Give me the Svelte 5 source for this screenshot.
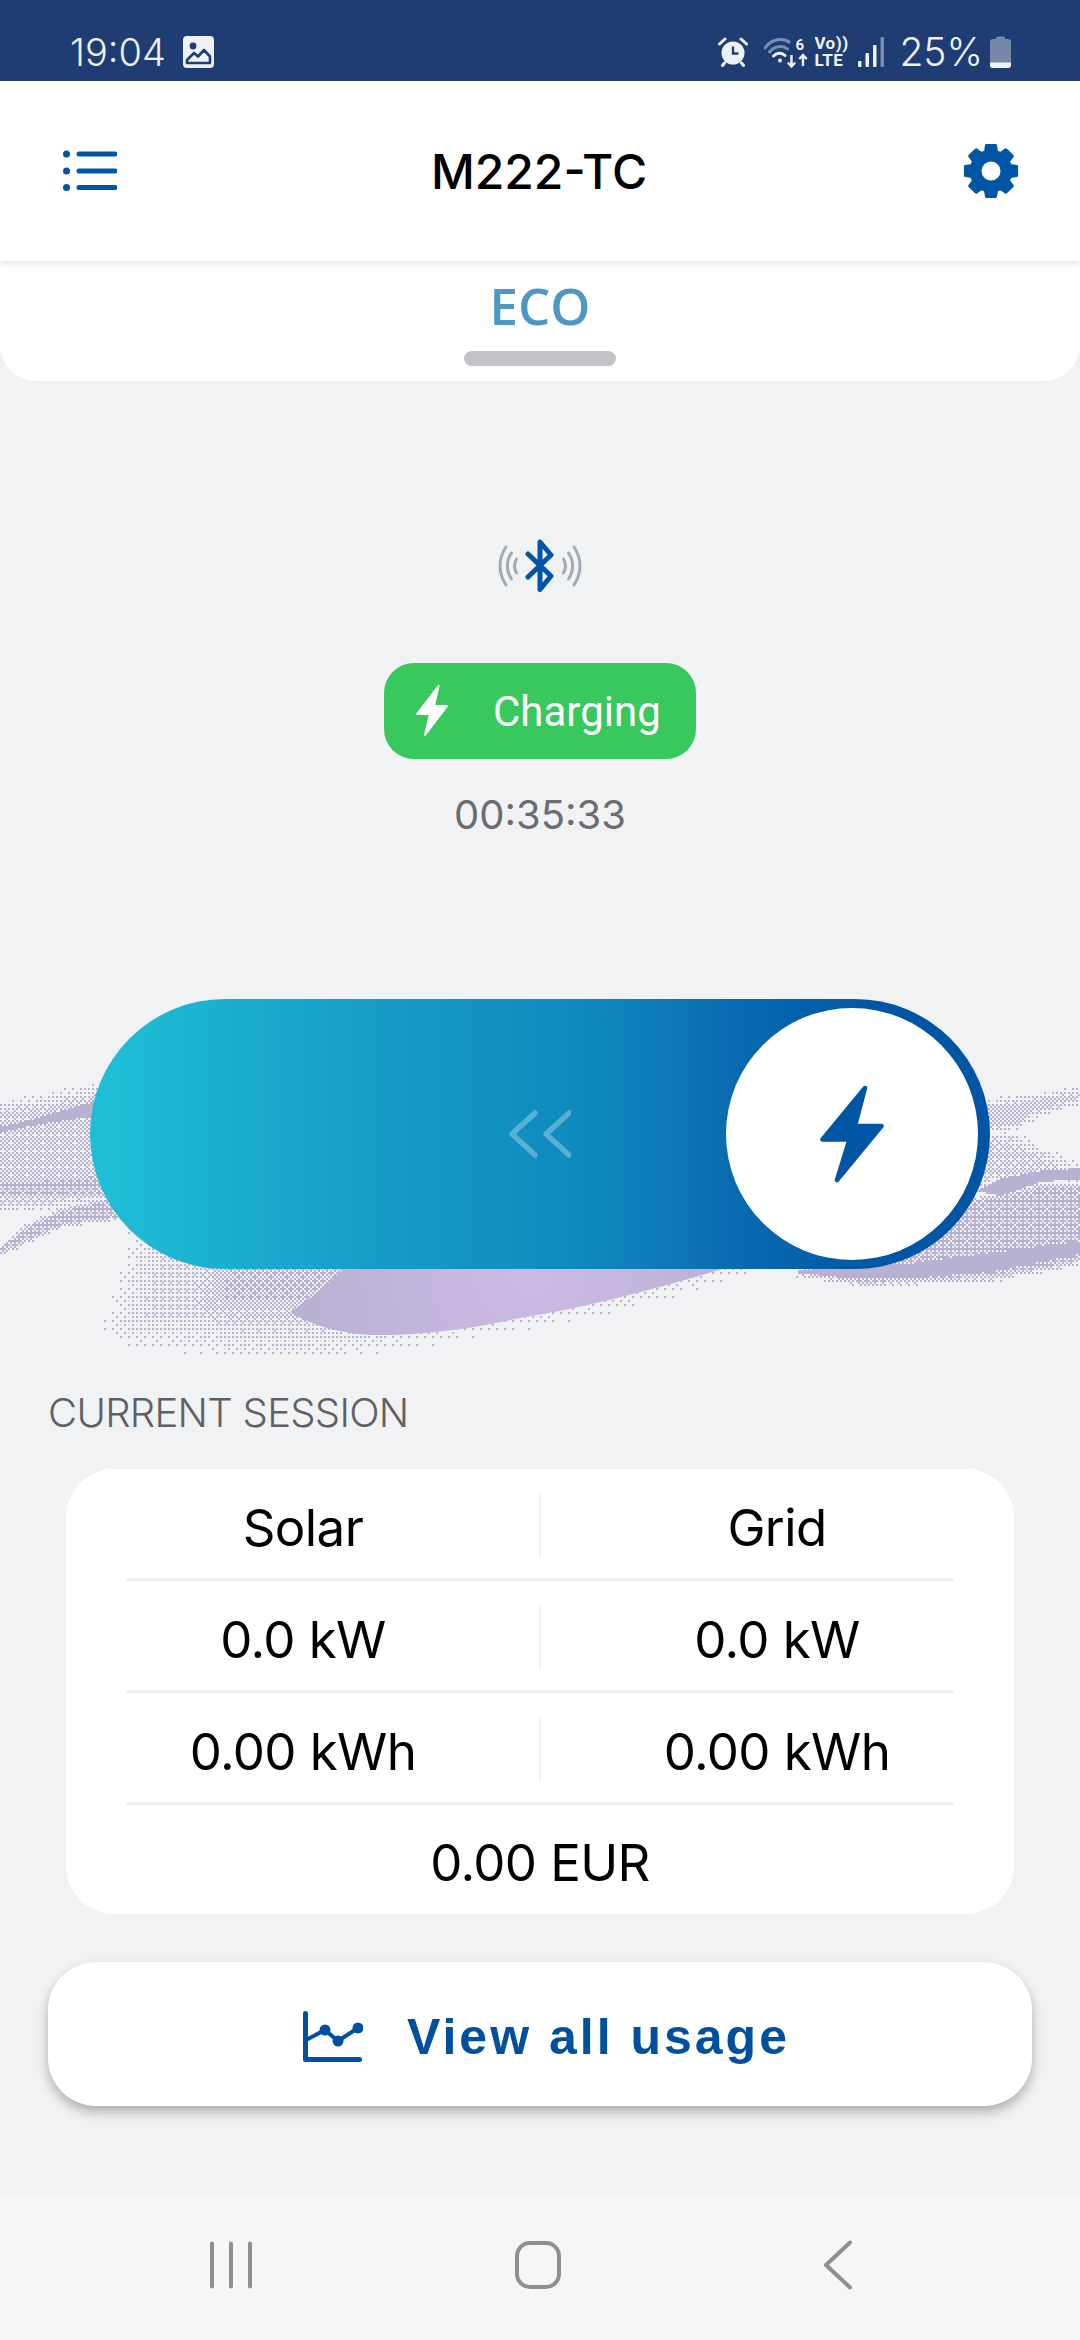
<script>
  const rows = [
    ['Solar', 'Grid'],
    ['0.0 kW', '0.0 kW'],
    ['0.00 kWh', '0.00 kWh']
  ];

  // dithered backdrop behind the slider: [density, fade px, polygon]
  const regions = [
    // left wave
    [0.45, 18, [[-20, 1100], [40, 1092], [97, 1080], [220, 1075], [220, 1203], [107, 1206], [60, 1212], [-20, 1216]]],
    [0.66, 14, [[-20, 1172], [100, 1165], [220, 1165], [220, 1200], [40, 1206], [-20, 1204]]],
    [0.7, 6, [[-10, 1250], [25, 1222], [60, 1205], [220, 1170], [220, 1205], [60, 1228], [3, 1255]]],
    [1, 0, [[0, 1126], [33, 1118], [60, 1110], [110, 1096], [110, 1114], [50, 1121], [0, 1131]]],
    // bottom wave
    [0.3, 40, [[135, 1200], [100, 1332], [125, 1348], [230, 1358], [300, 1360], [385, 1352], [457, 1340], [530, 1328], [590, 1318], [650, 1303], [760, 1272], [760, 1200]]],
    [0.6, 70, [[180, 1200], [150, 1338], [230, 1358], [300, 1360], [385, 1350], [457, 1338], [530, 1326], [590, 1316], [650, 1301], [760, 1270], [760, 1200]]],
    // right wave
    [0.5, 10, [[900, 1108], [1030, 1092], [1100, 1082], [1100, 1100], [1035, 1118], [1020, 1130], [900, 1145]]],
    [0.42, 16, [[900, 1135], [1010, 1128], [1050, 1148], [1100, 1168], [1100, 1180], [900, 1195]]],
    [0.66, 8, [[900, 1205], [1000, 1190], [1040, 1180], [1100, 1178], [1100, 1262], [990, 1282], [863, 1287], [790, 1276]]],
    [1, 0, [[975, 1190], [1000, 1178], [1040, 1170], [1080, 1167], [1080, 1178], [1040, 1181], [1000, 1195]]],
    [1, 0, [[797, 1269], [913, 1262], [990, 1252], [1080, 1240], [1080, 1253], [990, 1271], [900, 1278], [860, 1278], [797, 1272]]]
  ];

  const bayer = [
    [0, 32, 8, 40, 2, 34, 10, 42],
    [48, 16, 56, 24, 50, 18, 58, 26],
    [12, 44, 4, 36, 14, 46, 6, 38],
    [60, 28, 52, 20, 62, 30, 54, 22],
    [3, 35, 11, 43, 1, 33, 9, 41],
    [51, 19, 59, 27, 49, 17, 57, 25],
    [15, 47, 7, 39, 13, 45, 5, 37],
    [63, 31, 55, 23, 61, 29, 53, 21]
  ];

  function inside(poly, x, y) {
    let hit = false;
    for (let i = 0, j = poly.length - 1; i < poly.length; j = i++) {
      const [xi, yi] = poly[i];
      const [xj, yj] = poly[j];
      if (yi > y !== yj > y && x < ((xj - xi) * (y - yi)) / (yj - yi) + xi) hit = !hit;
    }
    return hit;
  }

  function edgeDistance(poly, x, y) {
    let best = Infinity;
    for (let i = 0, j = poly.length - 1; i < poly.length; j = i++) {
      const [ax, ay] = poly[j];
      const [bx, by] = poly[i];
      const dx = bx - ax;
      const dy = by - ay;
      const t = Math.max(0, Math.min(1, ((x - ax) * dx + (y - ay) * dy) / (dx * dx + dy * dy)));
      best = Math.min(best, Math.hypot(x - ax - t * dx, y - ay - t * dy));
    }
    return best;
  }

  function ditherPath() {
    let d = '';
    for (let y = 1080; y < 1360; y += 2) {
      for (let x = 0; x < 1080; x += 2) {
        let level = 0;
        for (const [density, fade, poly] of regions) {
          if (density <= level || !inside(poly, x, y)) continue;
          const soft = fade ? Math.min(1, 0.04 + edgeDistance(poly, x, y) / fade) : 1;
          level = Math.max(level, density * soft);
        }
        if (level > 0 && bayer[(y / 2) % 8][(x / 2) % 8] / 64 < level) d += `M${x} ${y}h2v2h-2z`;
      }
    }
    return d;
  }

  function gearPath() {
    const pt = (r, deg) => {
      const a = ((deg - 90) * Math.PI) / 180;
      return `${(r * Math.cos(a)).toFixed(2)} ${(r * Math.sin(a)).toFixed(2)}`;
    };
    let d = '';
    for (let i = 0; i < 8; i += 1) {
      const c = i * 45;
      d += `${i ? 'L' : 'M'}${pt(20, c - 16)} L${pt(26, c - 10)} L${pt(26, c + 10)} L${pt(20, c + 16)} `;
    }
    return `${d}Z M11 0 A11 11 0 1 0 -11 0 A11 11 0 1 0 11 0 Z`;
  }

  const dither = ditherPath();
  const gear = gearPath();
</script>

<div class="phone">
  <div class="status">
    <div class="status-left">
      <span class="clock">19:04</span>
      <svg class="pic" viewBox="0 0 31 32" width="31" height="32">
        <rect width="31" height="32" rx="4" fill="#eef1f7" />
        <circle cx="10" cy="10" r="3.4" fill="#1f3d72" />
        <path d="M4 27v-3l7-7 4 3.5L21 14l6 6.5V27z" fill="none" stroke="#1f3d72" stroke-width="2.6" stroke-linejoin="round" />
      </svg>
    </div>
    <div class="status-right">
      <svg class="alarm" viewBox="0 0 30 30" width="30" height="30">
        <circle cx="15" cy="16" r="11.5" fill="#eef1f7" />
        <path d="M15 9.500V16.500H20.500" fill="none" stroke="#1f3d72" stroke-width="2.400" />
        <path d="M1.500 7 7 2M28.500 7 23 2M6.500 26 4.500 28.500M23.500 26 25.500 28.500" stroke="#eef1f7" stroke-width="3" stroke-linecap="round" />
      </svg>
      <svg class="net" viewBox="0 0 44 32" width="44" height="32">
        <g fill="none" stroke-width="3" stroke-linecap="round">
          <path d="M1 12C8 2 20 2 25 6" stroke="#7d8fb0" />
          <path d="M5.500 16C10 10 19 9 23.500 13" stroke="#7d8fb0" />
          <path d="M9.500 20C13 16.500 18 16.500 21 19.500" stroke="#eef1f7" />
        </g>
        <circle cx="16" cy="24.500" r="2" fill="#eef1f7" />
        <text x="31.500" y="14" class="six">6</text>
        <path d="M27.500 19V30M23.800 26.500 27.500 30.500 31.200 26.500M39 30V19M35.300 23 39 19 42.700 23" fill="none" stroke="#eef1f7" stroke-width="2.400" />
      </svg>
      <div class="volte"><span>Vo))</span><span>LTE</span></div>
      <svg class="signal" viewBox="0 0 27 30" width="27" height="30">
        <rect x="0" y="24" width="3.500" height="6" rx="1" fill="#eef1f7" />
        <rect x="7.500" y="16" width="3.500" height="14" rx="1" fill="#eef1f7" />
        <rect x="15" y="8" width="3.500" height="22" rx="1" fill="#eef1f7" />
        <rect x="22.500" y="0" width="3.500" height="30" rx="1" fill="#7d8fb0" />
      </svg>
      <span class="pct">25%</span>
      <svg class="batt" viewBox="0 0 21 32" width="21" height="32">
        <path d="M6 2.500Q6 0.500 8 0.500H13Q15 0.500 15 2.500V3H18Q21 3 21 6V29Q21 32 18 32H3Q0 32 0 29V6Q0 3 3 3H6Z" fill="#7789ab" />
        <path d="M0 26.500H21V29Q21 32 18 32H3Q0 32 0 29Z" fill="#eef1f7" />
      </svg>
    </div>
  </div>

  <header class="topbar">
    <svg class="menu" viewBox="0 0 54 42" width="54" height="42">
      <circle cx="3.500" cy="4" r="3.500" />
      <circle cx="3.500" cy="21" r="3.500" />
      <circle cx="3.500" cy="37.500" r="3.500" />
      <rect x="13.500" y="1.500" width="41" height="5" rx="2.500" />
      <rect x="13.500" y="18.500" width="41" height="5" rx="2.500" />
      <rect x="13.500" y="35" width="41" height="5" rx="2.500" />
    </svg>
    <h1>M222-TC</h1>
    <svg class="gear" viewBox="-30 -30 60 60" width="60" height="60">
      <path d={gear} fill-rule="evenodd" stroke-width="3" stroke-linejoin="round" />
    </svg>
  </header>

  <div class="mode">
    <span class="mode-name">ECO</span>
    <span class="grip"></span>
  </div>

  <main class="content">
    <svg class="bt" viewBox="0 0 84 54" width="84" height="54">
      <g fill="none" stroke="#a4a8b4" stroke-width="3" stroke-linecap="round">
        <path d="M8 8C0 20 0 34 8 46" />
        <path d="M13.500 14C8 22 8 32 13.500 40" />
        <path d="M18.500 20C16 24 16 30 18.500 34" />
        <path d="M76 8C84 20 84 34 76 46" />
        <path d="M70.500 14C76 22 76 32 70.500 40" />
        <path d="M65.500 20C68 24 68 30 65.500 34" />
      </g>
      <path d="M30 15 53 37 42 50.500V3L53 16 30 38" fill="none" stroke="#0055a5" stroke-width="5" stroke-linecap="round" stroke-linejoin="round" />
    </svg>

    <div class="badge">
      <svg viewBox="0 0 34 54" width="34" height="54">
        <path d="M23.500 2 2 30H15L10 51 32 22H19Z" fill="#fff" stroke="#fff" stroke-width="2" stroke-linejoin="round" />
      </svg>
      <span>Charging</span>
    </div>
    <div class="elapsed">00:35:33</div>

    <section class="hero">
      <svg class="waves" viewBox="0 999 1080 370" width="1080" height="370" aria-hidden="true">
        <defs>
          <radialGradient id="wave-fill" gradientUnits="userSpaceOnUse" cx="530" cy="1270" r="230">
            <stop offset="0" stop-color="#ccbae4" />
            <stop offset="1" stop-color="#b9b1d2" />
          </radialGradient>
        </defs>
        <path d={dither} fill="#b9b1d2" />
        <path d="M350 1262Q322 1292 290 1312Q322 1332 370 1335Q440 1336 520 1318Q610 1304 745 1262Z" fill="url(#wave-fill)" />
      </svg>
      <div class="slider">
        <svg class="chevrons" viewBox="0 0 62 48" width="62" height="48">
          <path d="M26 3 3 24 26 45M60 3 37 24 60 45" fill="none" stroke="#fff" stroke-opacity="0.3" stroke-width="5.500" stroke-linecap="round" stroke-linejoin="round" />
        </svg>
        <div class="knob">
          <svg viewBox="0 0 64 98" width="64" height="98">
            <path d="M45 3 2.500 54.500H29.500L17 95 61.500 41H35Z" fill="#0055a5" stroke="#0055a5" stroke-width="4.500" stroke-linejoin="round" />
          </svg>
        </div>
      </div>
    </section>

    <div class="label">CURRENT SESSION</div>

    <div class="card">
      {#each rows as row}
        <div class="row">
          <div class="cell">{row[0]}</div>
          <div class="cell">{row[1]}</div>
        </div>
      {/each}
      <div class="total">0.00 EUR</div>
    </div>

    <button class="usage">
      <svg viewBox="0 0 60 52" width="60" height="52">
        <path d="M2.500 2.500V48.500H56.500" fill="none" stroke="#00509f" stroke-width="5" stroke-linecap="round" stroke-linejoin="round" />
        <path d="M3 29 22 19 35 30 55 17" fill="none" stroke="#00509f" stroke-width="4" />
        <circle cx="22" cy="19" r="5.500" fill="#00509f" />
        <circle cx="35" cy="30" r="5.500" fill="#00509f" />
        <circle cx="55" cy="17" r="5.500" fill="#00509f" />
      </svg>
      <span>View all usage</span>
    </button>
  </main>

  <nav class="navbar">
    <svg viewBox="0 0 44 48" width="44" height="48">
      <path d="M3 2.500V45.500M22 2.500V45.500M41 2.500V45.500" stroke="#8f8f92" stroke-width="4" stroke-linecap="round" />
    </svg>
    <svg viewBox="0 0 46 48" width="46" height="48">
      <rect x="2" y="2" width="42" height="44" rx="13" fill="none" stroke="#8f8f92" stroke-width="4" />
    </svg>
    <svg viewBox="0 0 30 50" width="30" height="50">
      <path d="M27 2.500 3 25 27 47.500" fill="none" stroke="#8f8f92" stroke-width="4" stroke-linecap="round" stroke-linejoin="round" />
    </svg>
  </nav>
</div>

<style>
  :global(body) { margin: 0; background: #f1f2f4; }

  .phone {
    width: 1080px;
    height: 2340px;
    display: flex;
    flex-direction: column;
    overflow: hidden;
    background: #f1f2f4;
    font-family: Inter, Roboto, "Liberation Sans", sans-serif;
  }

  .status {
    height: 81px;
    flex: none;
    box-sizing: border-box;
    padding: 0 69px 0 70px;
    display: flex;
    align-items: center;
    justify-content: space-between;
    background: #1f3d72;
    color: #eef1f7;
  }
  .status-left { display: flex; align-items: center; padding-top: 22px; }
  .clock { font-size: 38px; line-height: 48px; font-weight: 300; }
  .pic { margin-left: 17px; }
  .status-right { display: flex; align-items: center; padding-top: 22px; }
  .alarm { margin-right: 16px; }
  .net { margin-right: 6px; }
  .six { font: 700 15px Roboto, sans-serif; fill: #eef1f7; }
  .volte { display: flex; flex-direction: column; width: 32px; font-family: Roboto, sans-serif; font-size: 17px; line-height: 17px; font-weight: 700; letter-spacing: 0.5px; margin-right: 12px; }
  .signal { margin-right: 14px; }
  .pct { font-size: 39px; line-height: 48px; font-weight: 300; margin-right: 7px; }

  .topbar {
    height: 180px;
    flex: none;
    box-sizing: border-box;
    padding: 0 59px 0 63px;
    display: flex;
    align-items: center;
    justify-content: space-between;
    background: #fff;
    box-shadow: 0 2px 6px rgba(0, 0, 0, 0.12);
    position: relative;
    z-index: 2;
  }
  .topbar h1 { margin: 0; font-size: 48px; font-weight: 500; color: #000; }
  .menu { fill: #0055a5; }
  .gear { fill: #0055a5; stroke: #0055a5; }

  .mode {
    height: 120px;
    flex: none;
    box-sizing: border-box;
    padding-top: 14px;
    display: flex;
    flex-direction: column;
    align-items: center;
    background: #fff;
    border-radius: 0 0 36px 36px;
  }
  .mode-name { font-family: "Open Sans", sans-serif; font-size: 51px; line-height: 60px; font-weight: 600; color: #4f97c3; }
  .grip { width: 152px; height: 15px; margin-top: 16px; border-radius: 8px; background: #c2c3c6; }

  .content {
    flex: 1;
    display: flex;
    flex-direction: column;
    align-items: center;
  }
  .bt { margin-top: 158px; flex: none; }

  .badge {
    margin-top: 70px;
    width: 312px;
    height: 96px;
    box-sizing: border-box;
    padding-left: 31px;
    display: flex;
    align-items: center;
    gap: 44px;
    border-radius: 30px;
    background: #38c85d;
    color: #fff;
    font-family: Roboto, sans-serif;
    font-size: 42px;
  }

  .elapsed { margin-top: 31px; font-size: 40px; line-height: 50px; color: #6b6c70; }

  .hero { margin-top: 159px; width: 1080px; position: relative; }
  .waves { position: absolute; left: 0; top: 0; display: block; }
  .slider {
    position: relative;
    margin-left: 90px;
    width: 900px;
    height: 270px;
    border-radius: 135px;
    background: linear-gradient(90deg, #1fbdd6 2%, #169ec6 30%, #0f8abf 54%, #0d75b5 66%, #0a6cb0 71%, #0055a5 88%);
    display: flex;
    align-items: center;
    justify-content: center;
  }
  .knob {
    position: absolute;
    right: 12px;
    top: 9px;
    width: 252px;
    height: 252px;
    border-radius: 50%;
    background: #fff;
    display: flex;
    align-items: center;
    justify-content: center;
  }

  .label {
    align-self: flex-start;
    position: relative;
    margin: 119px 0 0 48px;
    font-size: 40px;
    line-height: 50px;
    font-weight: 300;
    letter-spacing: -0.7px;
    color: #5f6064;
  }

  .card {
    position: relative;
    margin-top: 31px;
    width: 948px;
    height: 445px;
    box-sizing: border-box;
    border-radius: 48px;
    background: #fff;
    font-size: 51px;
    letter-spacing: -0.6px;
    color: #000;
  }
  .row {
    position: relative;
    height: 112px;
    box-sizing: border-box;
    display: grid;
    grid-template-columns: 474px 474px;
    align-items: center;
    text-align: center;
  }
  .row::after {
    content: "";
    position: absolute;
    left: 60px;
    right: 60px;
    bottom: 0;
    height: 3px;
    background: #f0f1f3;
  }
  .cell { position: relative; height: 62px; line-height: 68px; }
  .cell:first-child::after {
    content: "";
    position: absolute;
    right: -1px;
    top: 0;
    width: 2px;
    height: 62px;
    background: #f0f1f3;
  }
  .total { height: 109px; line-height: 115px; text-align: center; }

  .usage {
    margin-top: 48px;
    width: 984px;
    height: 144px;
    box-sizing: border-box;
    padding: 6px 0 0 13px;
    border: none;
    border-radius: 48px;
    background: #fff;
    box-shadow: 0 6px 12px rgba(0, 0, 0, 0.28);
    display: flex;
    align-items: center;
    justify-content: center;
    gap: 44px;
    color: #00509f;
    font-family: "Liberation Sans", sans-serif;
    font-size: 50px;
    font-weight: 700;
    letter-spacing: 3px;
  }

  .navbar {
    height: 144px;
    flex: none;
    box-sizing: border-box;
    padding: 0 227px 6px 209px;
    display: flex;
    align-items: center;
    justify-content: space-between;
    background: #f5f6f8;
  }
</style>
